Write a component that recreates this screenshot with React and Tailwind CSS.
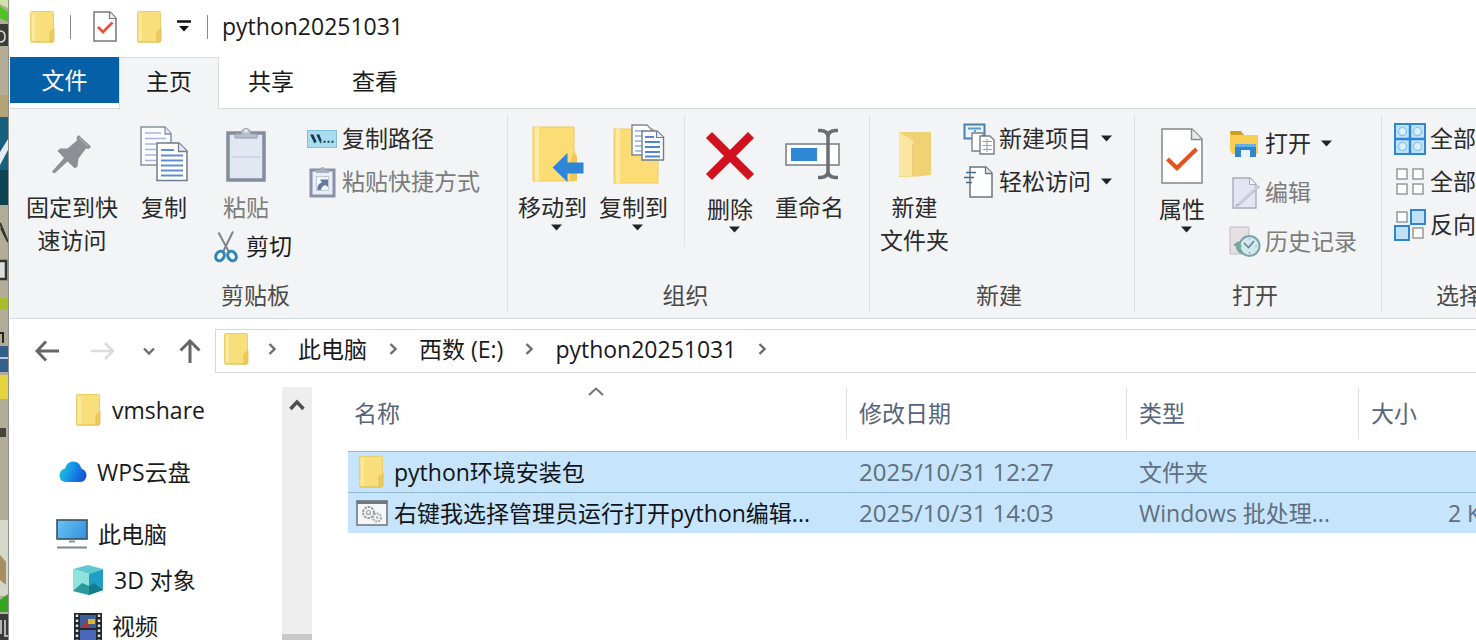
import React from "react";

const Svg = ({ w, h, className = "", children }) => (
  <svg width={w} height={h} viewBox={`0 0 ${w} ${h}`} fill="none" aria-hidden="true" className={`shrink-0 ${className}`}>
    {children}
  </svg>
);

/* ---------- icons ---------- */

const Folder = ({ className }) => (
  <Svg w={26} h={32} className={className}>
    <rect x="0.5" y="0.5" width="23" height="30.5" rx="1" fill="#f9de7c" stroke="#ead06a" />
    <rect x="2" y="2" width="3" height="28" fill="#fce9a0" />
    <path d="M20 31V22q0-2 2-2.500L24 17.500V30l-2 1Z" fill="#f0cb5b" stroke="#dfb94c" strokeWidth="0.8" />
    <path d="M1 31H22" stroke="#e3c050" />
  </Svg>
);

const CheckDoc = () => (
  <Svg w={24} h={31}>
    <path d="M1 1H17L23 7V30H1Z" fill="#fff" stroke="#77777d" strokeWidth="1.500" />
    <path d="M16.500 1V7.500H23" stroke="#77777d" strokeWidth="1.200" fill="#eee" />
    <path d="M5 16L10 21L19.500 11.500" stroke="#e8513e" strokeWidth="2.800" />
  </Svg>
);

const CustomizeArrow = () => (
  <Svg w={14} h={13}>
    <path d="M0 1.500H14" stroke="#111" strokeWidth="2.500" />
    <path d="M2 6H12L7 11.500Z" fill="#111" />
  </Svg>
);

const Caret = ({ className }) => (
  <Svg w={11} h={7} className={className}>
    <path d="M0 0.500H11L5.500 6.500Z" fill="#222" />
  </Svg>
);

const Pin = () => (
  <Svg w={40} h={40}>
    <path d="M26.500 1L39 12.500L37 15L34 14.500L26.500 24.500L25.500 32.500L23 34.500L15.500 27.500L3 39H0.500V37L12 24L5.500 17L8 14.500L15.500 14.500L25 6.500L24.500 3.500Z" fill="#8d9094" />
    <path d="M27 4L36.500 12.500" stroke="#a5a8ab" strokeWidth="1.500" />
  </Svg>
);

const Copy = () => (
  <Svg w={48} h={56}>
    <path d="M1 1H25L31 7.500V39H1Z" fill="#fbfcff" stroke="#8790a0" strokeWidth="1.500" />
    <path d="M25 1V8H31" stroke="#8790a0" strokeWidth="1.300" fill="#e6eaf2" />
    <path d="M5 7H21M5 12.500H26M5 18H16M5 23.500H16M5 29H16M5 34.500H16" stroke="#a9b3dc" strokeWidth="1.500" />
    <path d="M17 17H39L47 25V54.500H17Z" fill="#fff" stroke="#6f7b90" strokeWidth="1.500" />
    <path d="M38.500 17V25.500H47" stroke="#6f7b90" strokeWidth="1.300" fill="#e6eaf2" />
    <path d="M21 24H34M21 29.500H43M21 34.500H43M21 39.500H43M21 44.500H43M21 49.500H43" stroke="#5f8fd0" strokeWidth="2" />
  </Svg>
);

const Clipboard = () => (
  <Svg w={40} h={56}>
    <rect x="2" y="7" width="36" height="47" fill="#e2e8f2" stroke="#858d9c" strokeWidth="3.500" />
    <path d="M6 31H34" stroke="#c6d0e0" strokeWidth="1.500" />
    <path d="M9 12V8H15Q15 3 20 2.500Q25 3 25 8H31V12Z" fill="#b8bfcb" stroke="#969dab" strokeWidth="1" />
    <circle cx="20" cy="5" r="1.800" fill="#e9edf4" />
  </Svg>
);

const Scissors = () => (
  <Svg w={24} h={32}>
    <path d="M4.500 1.500L15 21M19 0.500L9 21" stroke="#7d848c" strokeWidth="2" />
    <ellipse cx="6" cy="25" rx="4" ry="5" stroke="#2f87b8" strokeWidth="3" transform="rotate(32 6 25)" />
    <ellipse cx="18" cy="25" rx="4" ry="5" stroke="#2f87b8" strokeWidth="3" transform="rotate(-32 18 25)" />
  </Svg>
);

const PathIcon = () => (
  <Svg w={30} h={18}>
    <rect x="0.500" y="0.500" width="29" height="17" fill="#a9dcf0" stroke="#82bfdc" />
    <path d="M4 4.500L8 13M10 4.500L14 13M5.500 4.500L9 12M11.500 4.500L14 11" stroke="#1b3c50" strokeWidth="1.600" />
    <path d="M16.500 11.800H18.500M20.500 11.800H22.500M24.500 11.800H26.500" stroke="#1b3c50" strokeWidth="2" />
  </Svg>
);

const ShortcutClip = () => (
  <Svg w={28} h={32}>
    <rect x="3" y="4" width="23" height="26" fill="#e8edf8" stroke="#8a90a8" strokeWidth="3" />
    <path d="M8 7V4H12Q12 1 14.500 1Q17 1 17 4H21V7Z" fill="#a9afbf" />
    <rect x="8.500" y="10.500" width="12" height="14" fill="#f6f8fc" stroke="#b4bdd2" strokeWidth="0.800" />
    <path d="M9.500 24Q8.500 18 14 16.500L12 13.500H20V21L17.500 19Q13.500 20 13 24Z" fill="#6577a3" />
  </Svg>
);

const MoveTo = () => (
  <Svg w={52} h={56} className="ml-2.5">
    <path d="M1 1H42V55H1Z" fill="#fbdc75" stroke="#eccb62" />
    <path d="M5 1V55" stroke="#fdeaa4" strokeWidth="4" />
    <path d="M42 25L45 30V55H38V36Z" fill="#f0c85a" />
    <path d="M20.500 41.500L35.500 27V36.500H51.500V47.500H35.500V56Z" fill="#2f86d6" />
  </Svg>
);

const CopyTo = () => (
  <Svg w={52} h={60} className="ml-2.5">
    <path d="M1 5H41L45 12V59H1Z" fill="#fbdc75" stroke="#eccb62" />
    <path d="M5 5V59" stroke="#fdeaa4" strokeWidth="4" />
    <path d="M19 1H34L39 6V31H19Z" fill="#fff" stroke="#7d8796" strokeWidth="1.400" />
    <path d="M22 7H31M22 12H29M22 17H28M22 22H28M22 27H28" stroke="#8fb0dd" strokeWidth="1.500" />
    <path d="M29 7H44L50.500 13V36H29Z" fill="#fff" stroke="#6f7b90" strokeWidth="1.400" />
    <path d="M43.500 7V13.500H50.500" stroke="#6f7b90" strokeWidth="1.200" fill="#e8ecf2" />
    <path d="M32 13H41M32 18H47M32 23H47M32 28H47M32 32.500H47" stroke="#4f86cf" strokeWidth="1.800" />
  </Svg>
);

const Delete = () => (
  <Svg w={50} h={50}>
    <path d="M4 4L46 46M46 4L4 46" stroke="#d2111f" strokeWidth="8.500" />
  </Svg>
);

const Rename = () => (
  <Svg w={56} h={52} className="ml-1.5">
    <rect x="1" y="16" width="53" height="21" fill="#fff" stroke="#777b80" strokeWidth="1.500" />
    <rect x="6" y="20" width="26" height="13" fill="#2d87d2" />
    <path d="M33 2.500H36Q43 3 43 9V43Q43 49 36 49.500H33M53 2.500H50Q43 3 43 9V43Q43 49 50 49.500H53" stroke="#6a6e74" strokeWidth="3.500" />
  </Svg>
);

const NewFolder = () => (
  <Svg w={34} h={48}>
    <path d="M1 2H33V45L14 47H1Z" fill="#efd274" />
    <path d="M1 2L13 9Q16 11 16 15V47L1 46Z" fill="#f9e5a0" />
    <path d="M15 14V46" stroke="#e1bd55" />
  </Svg>
);

const NewItem = () => (
  <Svg w={32} h={32}>
    <rect x="1.500" y="1.500" width="20" height="14" fill="#eaf3fb" stroke="#4a7fae" strokeWidth="2" />
    <path d="M5 5.500H18M12 7V9" stroke="#5b9ad0" strokeWidth="1.800" />
    <path d="M9 10H20V28H9Z" fill="#fff" stroke="#777d84" strokeWidth="1.300" />
    <path d="M17 13H27L31 17V31H17Z" fill="#fff" stroke="#777d84" strokeWidth="1.400" />
    <path d="M19.500 18.500H29M19.500 22.500H29M19.500 26.500H29M24 16V29" stroke="#9ba1a8" strokeWidth="1.100" />
  </Svg>
);

const EasyAccess = () => (
  <Svg w={32} h={32}>
    <path d="M7 1H23L29 7V31H7Z" fill="#fdfeff" stroke="#6f757b" strokeWidth="1.500" />
    <path d="M22.500 1V7.500H29" stroke="#6f757b" strokeWidth="1.300" fill="#e9ecef" />
    <path d="M3 6.500H13M1 11.500H11M3 16.500H9" stroke="#3d6f8c" strokeWidth="1.700" />
  </Svg>
);

const Properties = () => (
  <Svg w={42} h={56}>
    <path d="M1 1H31L41 11V55H1Z" fill="#fff" stroke="#85888c" strokeWidth="1.500" />
    <path d="M30.500 1V11.500H41" fill="#e8eaec" stroke="#85888c" strokeWidth="1.400" />
    <path d="M6.500 31L16 40L35.500 21" stroke="#e2541f" strokeWidth="4.200" />
  </Svg>
);

const OpenFolder = () => (
  <Svg w={32} h={28}>
    <path d="M1 2H12L15 5H29V24H3L1 20Z" fill="#f8cf52" />
    <path d="M1 1H12L15 5H2Z" fill="#d49b22" />
    <path d="M6 27V14H27V27H21V20H12V27Z" fill="#2f86cf" />
    <path d="M12 20H21V27H12Z" fill="#e8f3fb" />
    <path d="M6 14H27V17H6Z" fill="#63aee6" />
  </Svg>
);

const Edit = () => (
  <Svg w={32} h={32}>
    <path d="M4 1H21L27 7V31H4Z" fill="#e4e4f2" stroke="#a9aabc" strokeWidth="1.400" />
    <path d="M20.500 1V7.500H27" fill="#f4f4fa" stroke="#a9aabc" />
    <path d="M30 9L10 27L7 29" stroke="#b4b6c4" strokeWidth="2.600" />
    <path d="M29 9.500L9.500 27" stroke="#eff0f6" strokeWidth="1" />
  </Svg>
);

const History = () => (
  <Svg w={32} h={32}>
    <path d="M1 1H20V28H1Z" fill="#e6e0e4" stroke="#c0bcc2" />
    <circle cx="20.500" cy="20" r="10" fill="#d3e7ee" stroke="#7fa3ac" strokeWidth="2" />
    <path d="M15 17L19.500 21.500L25 15" stroke="#5f8792" strokeWidth="1.600" />
    <path d="M20.500 12V13.500M20.500 26V28M28 20H26.500" stroke="#7fa3ac" />
    <path d="M4 19L9.500 15L13 21H10.500Q11 26 16 29Q7 27.500 6.500 20Z" fill="#74a993" />
  </Svg>
);

const SelectAll = () => (
  <Svg w={32} h={32}>
    <rect x="1" y="1" width="30" height="30" fill="#bfe2fa" stroke="#2f85cf" strokeWidth="2" />
    <path d="M16 1V31M1 16H31" stroke="#2f85cf" strokeWidth="2.500" />
    {[8.5, 23.5].map((x) => [8.5, 23.5].map((y) => <circle key={`${x}-${y}`} cx={x} cy={y} r="4" fill="#d9effd" stroke="#7dbdee" strokeWidth="1.200" />))}
  </Svg>
);

const SelectNone = () => (
  <Svg w={32} h={28}>
    {[3, 19].map((x) => [1, 16].map((y) => <rect key={`${x}-${y}`} x={x} y={y} width="10" height="10" fill="#fff" stroke="#909396" strokeWidth="1.400" />))}
  </Svg>
);

const Invert = () => (
  <Svg w={32} h={32}>
    <rect x="3" y="3" width="10" height="10" fill="#fff" stroke="#909396" strokeWidth="1.400" />
    <rect x="19" y="19" width="10" height="10" fill="#fff" stroke="#909396" strokeWidth="1.400" />
    <rect x="17" y="1" width="14" height="14" fill="#bfe2fa" stroke="#2f85cf" strokeWidth="2" />
    <rect x="1" y="17" width="14" height="14" fill="#bfe2fa" stroke="#2f85cf" strokeWidth="2" />
  </Svg>
);

const Cloud = () => (
  <Svg w={28} h={24}>
    <defs>
      <linearGradient id="cloud" x1="0" y1="0" x2="28" y2="10" gradientUnits="userSpaceOnUse">
        <stop offset="0" stopColor="#2bd0c8" />
        <stop offset="0.500" stopColor="#1496e8" />
        <stop offset="1" stopColor="#1552d4" />
      </linearGradient>
    </defs>
    <path d="M6.500 22Q0.500 21 0.500 15.500Q0.500 10 6 8.500Q8 1.500 14 1.500Q20.500 1.500 22.500 8.500Q27.500 10.500 27.500 15.500Q27 21.500 21 22Z" fill="url(#cloud)" />
  </Svg>
);

const Computer = () => (
  <Svg w={32} h={30}>
    <defs>
      <linearGradient id="screen" x1="0" y1="0" x2="32" y2="20" gradientUnits="userSpaceOnUse">
        <stop stopColor="#6fc4f5" />
        <stop offset="1" stopColor="#2f8fdc" />
      </linearGradient>
    </defs>
    <rect x="1" y="1" width="30" height="19" fill="url(#screen)" stroke="#3c4f5f" strokeWidth="1.600" />
    <path d="M13 22.500H19" stroke="#8a949c" strokeWidth="2" />
    <path d="M1 28.500H31" stroke="#7b858e" strokeWidth="2" />
  </Svg>
);

const Cube = () => (
  <Svg w={32} h={32}>
    <path d="M1 5L16 1L31 5L17 10Z" fill="#5fc9cf" />
    <path d="M1 5L17 10V31L1 27Z" fill="#8fe3dc" />
    <path d="M17 10L31 5V26L17 31Z" fill="#1f9fc4" />
    <path d="M1 27L10 19L17 22V31Z" fill="#2a9a9d" />
    <path d="M17 31L31 26L22 19L17 22Z" fill="#157b8e" />
  </Svg>
);

const Film = () => (
  <Svg w={28} h={32} className="mt-1.5">
    <rect width="28" height="32" fill="#23262b" />
    <rect x="6" y="2" width="16" height="13" fill="#3b5f96" />
    <path d="M7 14L12 8L16 12V15H7Z" fill="#a43a44" />
    <path d="M14 6H21V11H14Z" fill="#d6b536" />
    <rect x="6" y="17" width="16" height="13" fill="#4966b8" />
    <path d="M3 1.500V32M25 1.500V32" stroke="#dfe1e4" strokeWidth="2.500" strokeDasharray="2.500 2.500" />
  </Svg>
);

const Batch = () => (
  <Svg w={32} h={26}>
    <rect x="1" y="1" width="30" height="24" fill="#f5f6f7" stroke="#74787d" strokeWidth="1.600" />
    <path d="M1 2.500H31" stroke="#74787d" strokeWidth="3" />
    <circle cx="12.500" cy="12.500" r="5.500" stroke="#999da1" strokeWidth="2" strokeDasharray="2.500 1" />
    <circle cx="12.500" cy="12.500" r="2" stroke="#999da1" strokeWidth="1.200" />
    <circle cx="21" cy="17.500" r="4" stroke="#a6aaae" strokeWidth="2" strokeDasharray="2 1" />
    <circle cx="21" cy="17.500" r="1.200" fill="#a6aaae" />
  </Svg>
);

const Back = () => (
  <Svg w={24} h={22}>
    <path d="M24 11H2M11 1.500L2 11L11 20.500" stroke="#666" strokeWidth="3" />
  </Svg>
);
const Forward = () => (
  <Svg w={24} h={22}>
    <path d="M0 11H22M14 3L22 11L14 19" stroke="#dcdcdc" strokeWidth="2.500" />
  </Svg>
);
const Down = () => (
  <Svg w={12} h={8}>
    <path d="M1 1.500L6 6.500L11 1.500" stroke="#6b6b6b" strokeWidth="2.400" />
  </Svg>
);
const Up = () => (
  <Svg w={22} h={24}>
    <path d="M11 24V2M1.500 11.500L11 2L20.500 11.500" stroke="#666" strokeWidth="3" />
  </Svg>
);
const Chevron = () => (
  <Svg w={8} h={12}>
    <path d="M1.500 1L6.500 6L1.500 11" stroke="#6d6d6d" strokeWidth="2.400" />
  </Svg>
);

/* Sliver of desktop wallpaper beside the window */
const Wallpaper = () => (
  <svg viewBox="0 0 8 640" preserveAspectRatio="none" width="9" className="h-full shrink-0 border-r border-[#8d8f8c]" aria-hidden="true">
    <rect width="8" height="640" fill="#b3ad97" />
    <path d="M0 6L8 12V22L0 18Z" fill="#4cc522" />
    <path d="M0 0H8V8L0 4Z" fill="#cfe3ab" />
    <path d="M0 24H8V46H0Z" fill="#3b3c3a" />
    <path d="M0 31Q5 31 5 37Q5 42 0 42" stroke="#ddd" strokeWidth="1.500" fill="none" />
    <path d="M0 95H8V117H0Z" fill="#b5a374" />
    <path d="M0 117H8V205H0Z" fill="#17607f" />
    <path d="M0 152L8 139V150L0 165Z" fill="#e4ebf3" />
    <path d="M0 170H8V205H0Z" fill="#0c4453" />
    <path d="M0 223L8 242M1 228L6 238" stroke="#33342f" strokeWidth="2" />
    <path d="M0 261H6V279H0" stroke="#33342f" strokeWidth="2.500" fill="#ddd" />
    <path d="M0 298H8V309H0Z" fill="#a9bd2c" />
    <path d="M0 333H3V343" stroke="#222" strokeWidth="2" fill="none" />
    <path d="M0 346H8V372H0Z" fill="#335f8d" />
    <path d="M0 358H8" stroke="#e5eef5" strokeWidth="1.500" />
    <path d="M0 375H8V399H0Z" fill="#e4d33c" />
    <path d="M0 428H6V437H0Z" fill="#46433b" />
    <path d="M0 520H8V596H0Z" fill="#d4d8c8" />
    <path d="M0 555L6 562V585L0 580Z" fill="#a98d64" />
    <path d="M0 600L8 594V612H0Z" fill="#35a51f" />
    <path d="M0 614H8V640H0Z" fill="#3b3a3a" />
    <path d="M1 620V634M5 620V636H8" stroke="#ddd" strokeWidth="1.500" fill="none" />
  </svg>
);

/* ---------- ribbon parts ---------- */

const BigButton = ({ icon, lines, caret, className = "", dim }) => (
  <button type="button" className={`flex shrink-0 flex-col items-center ${className}`}>
    <span className="flex h-[62px] items-center">{icon}</span>
    <span className={`mt-1.5 flex flex-col items-center whitespace-nowrap leading-[33px] ${dim ? "text-[#7c7c7c]" : "text-[#2b2b2b]"}`}>
      {lines.map((l) => (
        <span key={l}>{l}</span>
      ))}
    </span>
    {caret && <Caret className="ml-2" />}
  </button>
);

const SmallButton = ({ icon, label, caret, dim, className = "h-[43px]" }) => (
  <button type="button" className={`flex items-center whitespace-nowrap ${className} ${dim ? "text-[#7c7c7c]" : "text-[#2b2b2b]"}`}>
    <span className="mr-1 flex w-8 justify-center">{icon}</span>
    {label}
    {caret && <Caret className="ml-2.5" />}
  </button>
);

const Group = ({ label, className, children }) => (
  <section aria-label={label} className={`flex shrink-0 flex-col ${className}`}>
    <div className="flex h-[168px] items-start">{children}</div>
    <div className="pr-1.5 text-center leading-9 text-[#4a4a4a]">{label}</div>
  </section>
);

const Divider = () => <div className="my-1.5 w-px shrink-0 self-stretch bg-[#dcdfe2]" />;

const tabs = ["共享", "查看"];

const sidebar = [
  { icon: <Folder />, label: "vmshare", row: "h-[46px] pl-[66px]" },
  { icon: <Cloud />, label: "WPS云盘", row: "mt-4 h-[46px] pl-[49px]" },
  { icon: <Computer />, label: "此电脑", row: "mt-4 h-[46px] pl-[46px]" },
  { icon: <Cube />, label: "3D 对象", row: "h-[46px] pl-[62px]" },
  { icon: <Film />, label: "视频", row: "h-[46px] pl-[64px]" },
];

const files = [
  { icon: <Folder />, name: "python环境安装包", date: "2025/10/31 12:27", type: "文件夹", size: "" },
  { icon: <Batch />, name: "右键我选择管理员运行打开python编辑...", date: "2025/10/31 14:03", type: "Windows 批处理...", size: "2 KB" },
];

export default function App() {
  return (
    <div className="flex h-screen overflow-hidden bg-white font-['Open_Sans','Noto_Sans_CJK_SC',sans-serif] text-[23px] text-[#1a1a1a]">
      <Wallpaper />
      <div className="flex min-w-0 flex-1 flex-col overflow-hidden pl-px">
        {/* title bar */}
        <header className="flex h-[57px] shrink-0 items-center pb-1 pl-5">
          <Folder />
          <span className="ml-3.5 h-6 w-px bg-[#8a8a8a]" />
          <button type="button" aria-label="属性" className="ml-[22px]">
            <CheckDoc />
          </button>
          <button type="button" aria-label="新建文件夹" className="ml-5">
            <Folder />
          </button>
          <button type="button" aria-label="自定义快速访问工具栏" className="ml-3.5">
            <CustomizeArrow />
          </button>
          <span className="ml-4 h-6 w-px bg-[#8a8a8a]" />
          <h1 className="ml-3.5">python20251031</h1>
        </header>

        {/* tabs */}
        <div role="tablist" className="flex h-[51px] shrink-0 items-start">
          <button type="button" role="tab" aria-selected="false" className="h-[46px] w-[109px] shrink-0 bg-[#0560a8] text-white">
            文件
          </button>
          <button type="button" role="tab" aria-selected="true" className="z-10 h-[52px] w-[100px] shrink-0 border border-b-0 border-[#d9dcdf] bg-[#f3f4f5] pb-1">
            主页
          </button>
          {tabs.map((t) => (
            <button key={t} type="button" role="tab" aria-selected="false" className="h-12 w-[104px] shrink-0">
              {t}
            </button>
          ))}
        </div>

        {/* ribbon */}
        <div className="flex h-[211px] shrink-0 overflow-hidden border-y border-[#d6d9dc] bg-[#f3f4f5]">
          <Group label="剪贴板" className="w-[497px]">
            <BigButton icon={<Pin />} lines={["固定到快", "速访问"]} className="ml-4 pt-3.5" />
            <BigButton icon={<Copy />} lines={["复制"]} className="ml-[22px] pt-3.5" />
            <div className="ml-[26px] flex flex-col pt-3.5">
              <BigButton icon={<Clipboard />} lines={["粘贴"]} dim className="w-[64px]" />
              <button type="button" className="mt-1.5 flex items-center gap-2 whitespace-nowrap leading-[33px]">
                <Scissors />
                剪切
              </button>
            </div>
            <div className="ml-3.5 flex flex-col pt-2">
              <SmallButton icon={<PathIcon />} label="复制路径" />
              <SmallButton icon={<ShortcutClip />} label="粘贴快捷方式" dim />
            </div>
          </Group>
          <Divider />
          <Group label="组织" className="w-[361px]">
            <BigButton icon={<MoveTo />} lines={["移动到"]} caret className="ml-2.5 pt-3.5" />
            <BigButton icon={<CopyTo />} lines={["复制到"]} caret className="ml-3 pt-3.5" />
            <div className="ml-4 mt-1.5 h-[132px] w-px bg-[#dfe2e5]" />
            <BigButton icon={<Delete />} lines={["删除"]} caret className="ml-5 pt-4" />
            <BigButton icon={<Rename />} lines={["重命名"]} className="ml-5 pt-3.5" />
          </Group>
          <Divider />
          <Group label="新建" className="w-[264px]">
            <BigButton icon={<NewFolder />} lines={["新建", "文件夹"]} className="ml-2.5 pt-3.5" />
            <div className="ml-3.5 flex flex-col pt-2">
              <SmallButton icon={<NewItem />} label="新建项目" caret />
              <SmallButton icon={<EasyAccess />} label="轻松访问" caret />
            </div>
          </Group>
          <Divider />
          <Group label="打开" className="w-[246px]">
            <BigButton icon={<Properties />} lines={["属性"]} caret className="ml-6 pt-4" />
            <div className="ml-6 flex flex-col pt-2.5">
              <SmallButton icon={<OpenFolder />} label="打开" caret className="h-[49px]" />
              <SmallButton icon={<Edit />} label="编辑" dim className="h-[49px]" />
              <SmallButton icon={<History />} label="历史记录" dim className="h-[49px]" />
            </div>
          </Group>
          <Divider />
          <Group label="选择" className="w-[160px]">
            <div className="ml-3 flex flex-col pt-2">
              <SmallButton icon={<SelectAll />} label="全部选择" />
              <SmallButton icon={<SelectNone />} label="全部取消" />
              <SmallButton icon={<Invert />} label="反向选择" />
            </div>
          </Group>
        </div>

        {/* address row */}
        <div className="flex h-[54px] shrink-0 items-end">
          <div className="flex h-11 shrink-0 items-center pl-[25px]">
            <button type="button" aria-label="后退">
              <Back />
            </button>
            <button type="button" aria-label="前进" className="ml-8">
              <Forward />
            </button>
            <button type="button" aria-label="最近浏览的位置" className="ml-7">
              <Down />
            </button>
            <button type="button" aria-label="向上" className="ml-6">
              <Up />
            </button>
          </div>
          <nav aria-label="地址" className="ml-3.5 flex h-11 flex-1 items-center whitespace-nowrap border border-r-0 border-[#d6d8da] pb-1 pl-2">
            <Folder />
            <span className="ml-[18px] mr-[22px]">
              <Chevron />
            </span>
            <button type="button">此电脑</button>
            <span className="mx-[22px]">
              <Chevron />
            </span>
            <button type="button">西数 (E:)</button>
            <span className="mx-[22px]">
              <Chevron />
            </span>
            <button type="button">python20251031</button>
            <span className="mx-[22px]">
              <Chevron />
            </span>
          </nav>
        </div>

        {/* body */}
        <div className="flex min-h-0 flex-1">
          <aside className="w-[272px] shrink-0 overflow-hidden pt-3.5">
            {sidebar.map((s) => (
              <button key={s.label} type="button" className={`flex w-full items-center gap-2.5 whitespace-nowrap ${s.row}`}>
                {s.icon}
                {s.label}
              </button>
            ))}
          </aside>
          <div className="mt-3.5 flex w-[30px] shrink-0 flex-col bg-[#eeeeee]">
            <button type="button" aria-label="向上滚动" className="flex h-9 items-center justify-center">
              <Svg w={16} h={12}>
                <path d="M1.500 10L8 3L14.500 10" stroke="#505050" strokeWidth="3.500" />
              </Svg>
            </button>
            <div className="flex-1" />
            <div className="h-1.5 bg-[#c9c9c9]" />
          </div>
          <main className="min-w-0 flex-1 overflow-hidden pl-9 pt-3.5">
            <table className="w-[1160px] table-fixed border-collapse text-left">
              <colgroup>
                <col className="w-[499px]" />
                <col className="w-[280px]" />
                <col className="w-[232px]" />
                <col className="w-[149px]" />
              </colgroup>
              <thead>
                <tr className="h-[64px] align-top text-[#56657a]">
                  {["名称", "修改日期", "类型", "大小"].map((h, i) => (
                    <th key={h} scope="col" className="relative p-0 font-normal">
                      <div className={`h-[52px] border-r border-[#e0e3e6] leading-[52px] ${i === 0 ? "pl-1.5" : "pl-3"}`}>{h}</div>
                      {i === 0 && (
                        <Svg w={16} h={9} className="absolute left-60 top-0">
                          <path d="M1 8L8 1.500L15 8" stroke="#6a747e" strokeWidth="2" />
                        </Svg>
                      )}
                    </th>
                  ))}
                </tr>
              </thead>
              <tbody>
                {files.map((f) => (
                  <tr key={f.name} className="h-[41px] border-t border-[#92b9d6] bg-[#c6e4fb] text-[#5f6f7d]">
                    <td className="p-0 text-[#101418]">
                      <div className="flex items-center gap-1.5 whitespace-nowrap pl-2 leading-10">
                        <span className="flex w-8 justify-center">{f.icon}</span>
                        {f.name}
                      </div>
                    </td>
                    <td className="whitespace-nowrap p-0 pl-3 text-[24px] leading-10">{f.date}</td>
                    <td className="whitespace-nowrap p-0 pl-3 leading-10">{f.type}</td>
                    <td className="whitespace-nowrap p-0 pr-3 text-right leading-10">{f.size}</td>
                  </tr>
                ))}
              </tbody>
            </table>
          </main>
        </div>
      </div>
    </div>
  );
}
